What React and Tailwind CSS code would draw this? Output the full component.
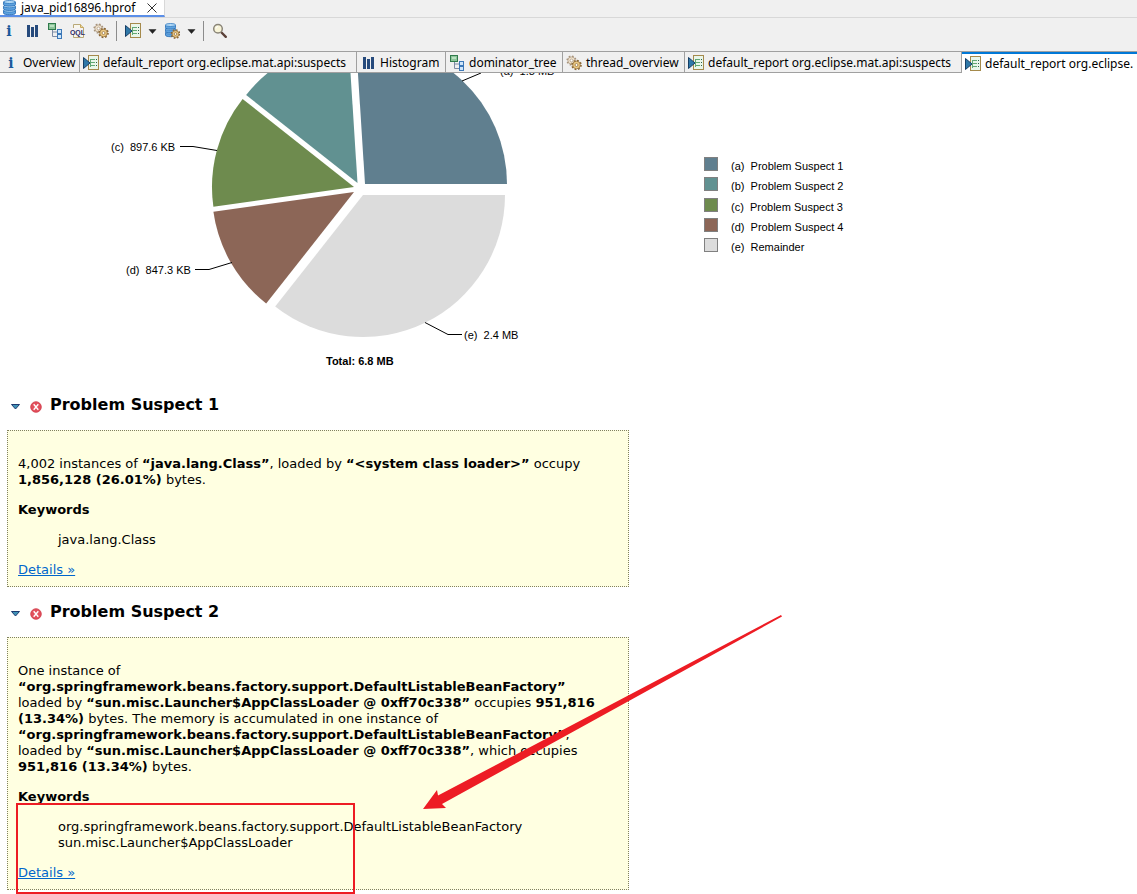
import React from "react";

function InfoIcon() {
  return (
    <svg width="16" height="16" viewBox="0 0 16 16" aria-hidden="true" className="shrink-0">
      <text x="8" y="13" textAnchor="middle" fill="#1c5a9c" className="font-['DejaVu_Serif',serif] text-[14px] font-bold">
        i
      </text>
    </svg>
  );
}

function BarsIcon() {
  return (
    <svg width="16" height="16" viewBox="0 0 16 16" aria-hidden="true" className="shrink-0">
      <path d="M3 2h3v12H3zM7 4h3v10H7zM11 2h3v12h-3z" fill="#264a7c" />
    </svg>
  );
}

function TreeIcon() {
  return (
    <svg width="16" height="16" viewBox="0 0 16 16" aria-hidden="true" className="shrink-0">
      <path d="M5.5 7v6.5H10M5.5 9H10" fill="none" stroke="#7d8ba5" />
      <rect x="1.5" y="0.5" width="7" height="6" fill="#8cc49a" stroke="#2f7a4b" />
      <rect x="3" y="2" width="4" height="2" fill="#b8e0bf" />
      <rect x="10.5" y="6.5" width="4" height="4" fill="#cfe6fa" stroke="#3c78b8" />
      <rect x="10.5" y="11.5" width="4" height="4" fill="#cfe6fa" stroke="#3c78b8" />
    </svg>
  );
}

function OqlIcon() {
  return (
    <svg width="16" height="16" viewBox="0 0 16 16" aria-hidden="true" className="shrink-0">
      <path d="M3.5 1.5h7l3 3v10h-10z" fill="#f8f6ee" stroke="#b9a878" />
      <path d="M10.5 1.5v3h3" fill="#e8d9a8" stroke="#c9a85c" />
      <rect x="1" y="5" width="12" height="7" fill="#f3f1f4" />
      <text x="7.5" y="11.5" textAnchor="middle" fill="#2d2a63" className="font-['Liberation_Sans',sans-serif] text-[7px] font-bold">
        OQL
      </text>
    </svg>
  );
}

function Gear({ cx, cy, r, fill = "#ecc983", stroke = "#8a6534" }) {
  return (
    <g>
      <circle cx={cx} cy={cy} r={r} fill="none" stroke={stroke} strokeWidth="1.8" strokeDasharray={`${(r * Math.PI) / 8} ${(r * Math.PI) / 8}`} />
      <circle cx={cx} cy={cy} r={r - 0.6} fill={fill} stroke={stroke} strokeWidth="0.7" />
      <circle cx={cx} cy={cy} r={r / 3} fill="#fff" stroke={stroke} strokeWidth="0.7" />
    </g>
  );
}

function GearsIcon() {
  return (
    <svg width="16" height="16" viewBox="0 0 16 16" aria-hidden="true" className="shrink-0">
      <Gear cx={5.5} cy={5.5} r={4.2} fill="#efe2cc" stroke="#a8947c" />
      <Gear cx={10.5} cy={10} r={4.4} />
    </svg>
  );
}

function ReportIcon() {
  return (
    <svg width="16" height="16" viewBox="0 0 16 16" aria-hidden="true" className="shrink-0">
      <rect x="5.5" y="0.5" width="10" height="14" fill="#e9f6ea" stroke="#a58a4c" />
      <path d="M7.5 4v8M7 4.5h5M7 7.5h5M7 10.5h5" fill="none" stroke="#62a874" />
      <path d="M13 4.5h1M13 7.5h1M13 10.5h1" stroke="#2f5f46" />
      <path d="M0.5 2.5v11L7 8z" fill="#2f78a8" stroke="#173f66" />
    </svg>
  );
}

function Disk({ y, w }) {
  return (
    <g>
      <path d={`M0.500 ${y}v2.600c0 2 ${w} 2 ${w} 0v-2.600z`} fill="#5fa3e0" stroke="#2468b0" strokeWidth="0.8" />
      <ellipse cx={0.5 + w / 2} cy={y} rx={w / 2} ry="1.5" fill="#b4daf6" stroke="#2f78c0" strokeWidth="0.8" />
    </g>
  );
}

function DatabaseIcon({ gear }) {
  const w = gear ? 10 : 12;
  const pitch = gear ? 3.8 : 4.3;
  return (
    <svg width="16" height="16" viewBox="-1 0 16 16" aria-hidden="true" className="shrink-0">
      <Disk y={2 + 2 * pitch} w={w} />
      <Disk y={2 + pitch} w={w} />
      <Disk y={2} w={w} />
      {gear && <Gear cx={10.5} cy={11} r={4} />}
    </svg>
  );
}

function SearchIcon() {
  return (
    <svg width="16" height="16" viewBox="0 0 16 16" aria-hidden="true" className="shrink-0">
      <path d="M9.5 9.5l4.3 4.3" stroke="#5a4038" strokeWidth="2.4" strokeLinecap="round" />
      <circle cx="6" cy="5.8" r="4.3" fill="#f8f4d8" stroke="#8a8578" strokeWidth="1.5" />
      <path d="M4 5.5a2 2 0 0 1 2-2" fill="none" stroke="#fff" />
    </svg>
  );
}

function Caret() {
  return (
    <svg width="9" height="5" viewBox="0 0 9 5" aria-hidden="true">
      <path d="M1 0.5h7L4.5 4.5z" fill="#222" stroke="#222" strokeWidth="0.5" />
    </svg>
  );
}

function ToolButton({ label, children }) {
  return (
    <button type="button" aria-label={label} className="flex shrink-0 items-center">
      {children}
    </button>
  );
}

function Separator() {
  return <span className="mr-px h-5 w-px shrink-0 bg-[#8c8c8c]" />;
}

const tabs = [
  { icon: InfoIcon, label: "Overview", width: "min-w-[80px]" },
  { icon: ReportIcon, label: "default_report org.eclipse.mat.api:suspects", width: "min-w-[277px]" },
  { icon: BarsIcon, label: "Histogram", width: "min-w-[89px]" },
  { icon: TreeIcon, label: "dominator_tree", width: "min-w-[117px]" },
  { icon: GearsIcon, label: "thread_overview", width: "min-w-[122px]" },
  { icon: ReportIcon, label: "default_report org.eclipse.mat.api:suspects", width: "min-w-[277px]" },
  { icon: ReportIcon, label: "default_report org.eclipse.", active: true },
];

const slices = [
  { from: 0, to: 93.64, x: 365, y: 184, fill: "#607f8f" },
  { from: 93.64, to: 141.66, x: 357.5, y: 183, fill: "#619191" },
  { from: 141.66, to: 188.03, x: 354, y: 187, fill: "#6e8b4e" },
  { from: 188.03, to: 231.8, x: 354, y: 192, fill: "#8c6657" },
  { from: 231.8, to: 360, x: 363, y: 195, fill: "#dcdcdc" },
];

function slicePath({ from, to, x, y }) {
  const r = 142;
  const at = (deg) => {
    const a = (deg * Math.PI) / 180;
    return `${(x + r * Math.cos(a)).toFixed(2)} ${(y - r * Math.sin(a)).toFixed(2)}`;
  };
  return `M${x} ${y}L${at(from)}A${r} ${r} 0 0 0 ${at(to)}Z`;
}

function PieChart() {
  return (
    <svg width="600" height="307" viewBox="0 73 600 307" role="img" aria-label="Memory by problem suspect" className="shrink-0">
      {slices.map((s) => (
        <path key={s.from} d={slicePath(s)} fill={s.fill} />
      ))}
      <path
        d="M462 81L481 73M180 146.5H193L217 150.5M195 269.5H209L232 262.5M425 322.5L448 334.5H462"
        fill="none"
        stroke="#000"
      />
      <g className="font-['Liberation_Sans',Arial,sans-serif] text-[11px]" fill="#000">
        <text x="500" y="75">{"(a)\u00a0 1.8 MB"}</text>
        <text x="111" y="151">{"(c)\u00a0 897.6 KB"}</text>
        <text x="126" y="274">{"(d)\u00a0 847.3 KB"}</text>
        <text x="464" y="339">{"(e)\u00a0 2.4 MB"}</text>
        <text x="326" y="365" className="font-bold">Total: 6.8 MB</text>
      </g>
    </svg>
  );
}

const legend = [
  { text: "(a)  Problem Suspect 1", color: "bg-[#607f8f]" },
  { text: "(b)  Problem Suspect 2", color: "bg-[#619191]" },
  { text: "(c)  Problem Suspect 3", color: "bg-[#6e8b4e]" },
  { text: "(d)  Problem Suspect 4", color: "bg-[#8c6657]" },
  { text: "(e)  Remainder", color: "bg-[#dcdcdc]" },
];

function Suspect({ title, keywords, lines }) {
  return (
    <section>
      <div className="flex h-[50px] items-center pl-[11px]">
        <button type="button" aria-label={`Collapse ${title}`} className="mt-1">
          <svg width="9" height="6" viewBox="0 0 9 6" aria-hidden="true">
            <path d="M0.5 0.5h8l-4 4.5z" fill="#3f93b8" stroke="#1d3b70" />
          </svg>
        </button>
        <svg width="12" height="12" viewBox="0 0 12 12" aria-hidden="true" className="mt-1 ml-[10px]">
          <circle cx="6" cy="6" r="5.3" fill="#e2505c" stroke="#cf3a48" strokeWidth="0.8" />
          <path d="M3.7 3.3l4.6 5.4M8.3 3.3L3.7 8.7" stroke="#fff" strokeWidth="1.4" />
        </svg>
        <h2 className="ml-2 text-[16px] leading-6 font-bold">{title}</h2>
      </div>
      <div className="ml-[7px] flex max-w-[622px] flex-col items-start gap-[14px] border border-dotted border-[#808060] bg-[#ffffe1] px-[10px] pt-[25px] pb-2 text-[13px] leading-4">
        <p>
          {lines.map((line, i) => (
            <span key={i} className="block">
              {line}
            </span>
          ))}
        </p>
        <h3 className="font-bold">Keywords</h3>
        <ul className="pl-10">
          {keywords.map((k) => (
            <li key={k}>{k}</li>
          ))}
        </ul>
        <a href="#details" className="text-[#0066cc] underline">Details »</a>
      </div>
    </section>
  );
}

export default function App() {
  return (
    <div className="flex h-screen flex-col overflow-hidden bg-white font-['Noto_Sans','Noto_Sans_CJK_SC',sans-serif] text-black">
      <header className="shrink-0 bg-[#f0f0f0] text-[12px]">
        <div className="flex h-[18px] border-b border-[#d8d8d8]">
          <div className="flex h-[17px] items-center border-r border-b-2 border-r-[#d8d8d8] border-b-[#5b8fe8] bg-white pr-[7px] pl-[2px]">
            <DatabaseIcon />
            <span className="ml-[3px] leading-4 whitespace-nowrap">java_pid16896.hprof</span>
            <button type="button" aria-label="Close" className="ml-3">
              <svg width="10" height="10" viewBox="0 0 10 10" aria-hidden="true">
                <path d="M0.5 0.5l9 9M9.5 0.5l-9 9" stroke="#333" />
              </svg>
            </button>
          </div>
        </div>
        <div className="flex h-[33px] items-center gap-[7px] pb-[7px] pl-px">
          <ToolButton label="Overview"><InfoIcon /></ToolButton>
          <ToolButton label="Histogram"><BarsIcon /></ToolButton>
          <ToolButton label="Dominator tree"><TreeIcon /></ToolButton>
          <ToolButton label="OQL"><OqlIcon /></ToolButton>
          <ToolButton label="Thread overview"><GearsIcon /></ToolButton>
          <Separator />
          <ToolButton label="Run report"><ReportIcon /></ToolButton>
          <ToolButton label="Report menu"><Caret /></ToolButton>
          <ToolButton label="Query browser"><DatabaseIcon gear /></ToolButton>
          <ToolButton label="Query menu"><Caret /></ToolButton>
          <Separator />
          <ToolButton label="Find"><SearchIcon /></ToolButton>
        </div>
        <nav className="flex h-[22px] border-t border-[#a0a0a0]">
          {tabs.map(({ icon: Icon, label, active, width }, i) => (
            <button
              key={i}
              type="button"
              className={
                active
                  ? "flex min-w-0 flex-1 items-center gap-1 border-t-2 border-[#0078d7] bg-white pl-[3px] whitespace-nowrap"
                  : `flex shrink-0 items-center gap-1 border-r border-b border-[#a0a0a0] pt-px pl-[3px] whitespace-nowrap ${width}`
              }
            >
              <Icon />
              {label}
            </button>
          ))}
        </nav>
      </header>

      <main className="relative min-h-0 flex-1 overflow-hidden font-['DejaVu_Sans',Verdana,sans-serif]">
        <div className="flex">
          <PieChart />
          <ul className="mt-[84px] ml-[104px] flex h-[97px] flex-col justify-between font-['Liberation_Sans',Arial,sans-serif] text-[11px]">
            {legend.map((l) => (
              <li key={l.text} className="flex h-4 items-start gap-[13px] leading-[18px] whitespace-pre">
                <span className={`size-[14px] border border-[#808080] ${l.color}`} />
                {l.text}
              </li>
            ))}
          </ul>
        </div>

        <Suspect
          title="Problem Suspect 1"
          keywords={["java.lang.Class"]}
          lines={[
            <>4,002 instances of <b>“java.lang.Class”</b>, loaded by <b>“&lt;system class loader&gt;”</b> occupy</>,
            <><b>1,856,128 (26.01%)</b> bytes.</>,
          ]}
        />
        <Suspect
          title="Problem Suspect 2"
          keywords={["org.springframework.beans.factory.support.DefaultListableBeanFactory", "sun.misc.Launcher$AppClassLoader"]}
          lines={[
            "One instance of",
            <b>“org.springframework.beans.factory.support.DefaultListableBeanFactory”</b>,
            <>loaded by <b>“sun.misc.Launcher$AppClassLoader @ 0xff70c338”</b> occupies <b>951,816</b></>,
            <><b>(13.34%)</b> bytes. The memory is accumulated in one instance of</>,
            <><b>“org.springframework.beans.factory.support.DefaultListableBeanFactory”</b>,</>,
            <>loaded by <b>“sun.misc.Launcher$AppClassLoader @ 0xff70c338”</b>, which occupies</>,
            <><b>951,816 (13.34%)</b> bytes.</>,
          ]}
        />

        <svg width="800" height="821" viewBox="0 73 800 821" aria-hidden="true" className="pointer-events-none absolute top-0 left-0">
          <rect x="17" y="804" width="337" height="89" fill="none" stroke="#ed1c24" strokeWidth="2" />
          <path d="M423 809L437 790L438 795.5L781 615L782 616.5L442 804L446 808Z" fill="#ed1c24" />
        </svg>
      </main>
    </div>
  );
}
